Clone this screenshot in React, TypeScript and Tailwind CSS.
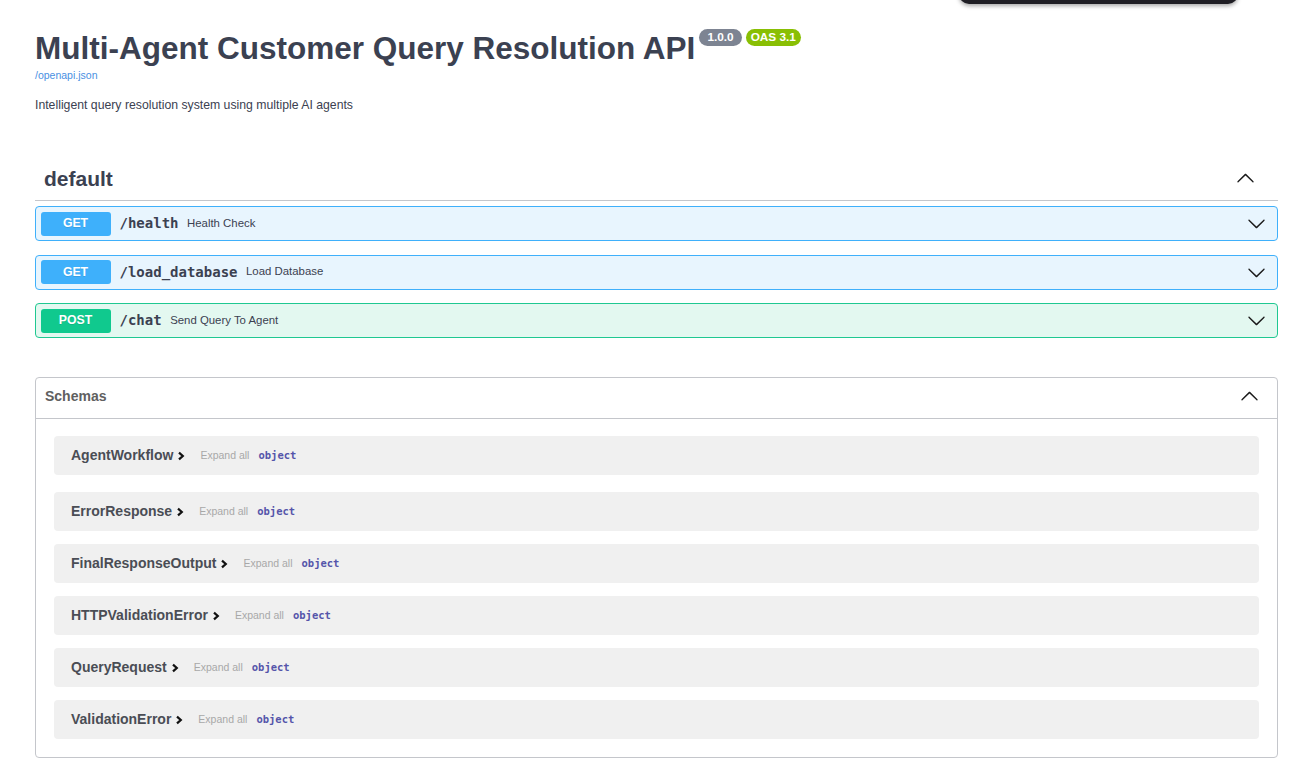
import React from "react";

const SANS = { fontFamily: '"Liberation Sans", Arial, sans-serif' };
const MONO = { fontFamily: '"DejaVu Sans Mono", "Liberation Mono", monospace' };

function Chevron({ up = false, className = "" }: { up?: boolean; className?: string }) {
  return (
    <svg
      viewBox="0 0 20 20"
      className={className}
      style={{ transform: up ? "rotate(180deg)" : undefined }}
      fill="#1b1b1b"
    >
      <path d="M17.418 6.109c.272-.268.709-.268.979 0s.271.701 0 .969l-7.908 7.83c-.27.268-.707.268-.979 0l-7.908-7.83c-.27-.268-.27-.701 0-.969.271-.268.709-.268.979 0L10 13.25l7.418-7.141z" />
    </svg>
  );
}

function RightArrow() {
  return (
    <svg viewBox="0 0 10 10" className="w-[10px] h-[10px]">
      <polyline
        points="3,1.6 6.8,5 3,8.4"
        fill="none"
        stroke="#111"
        strokeWidth="2.2"
        strokeLinecap="butt"
        strokeLinejoin="miter"
      />
    </svg>
  );
}

type Op = { method: "GET" | "POST"; path: string; summary: string };

const ops: Op[] = [
  { method: "GET", path: "/health", summary: "Health Check" },
  { method: "GET", path: "/load_database", summary: "Load Database" },
  { method: "POST", path: "/chat", summary: "Send Query To Agent" },
];

const schemas = [
  "AgentWorkflow",
  "ErrorResponse",
  "FinalResponseOutput",
  "HTTPValidationError",
  "QueryRequest",
  "ValidationError",
];

function OpRow({ op }: { op: Op }) {
  const isGet = op.method === "GET";
  return (
    <div
      className={
        "flex items-center h-[35px] rounded-[4px] border px-[4.5px] " +
        (isGet ? "border-[#3fb0fb] bg-[#e8f5fe]" : "border-[#1fc891] bg-[#e3f8f0]")
      }
    >
      <div
        className={
          "w-[70px] h-[24px] rounded-[3px] flex items-center justify-center text-white font-bold text-[12.25px] " +
          (isGet ? "bg-[#3eb0fb]" : "bg-[#10c98e]")
        }
        style={{ ...SANS, textShadow: "0 1px 0 rgba(0,0,0,.1)" }}
      >
        {op.method}
      </div>
      <span className="ml-[9px] text-[14px] font-bold text-[#3b4151]" style={MONO}>
        {op.path}
      </span>
      <span className="ml-[8.5px] text-[11.4px] text-[#3b4151]" style={SANS}>
        {op.summary}
      </span>
      <div className="flex-1" />
      <Chevron className="w-[19px] h-[19px] mr-[7px]" />
    </div>
  );
}

export default function App() {
  return (
    <div className="relative min-h-screen bg-white overflow-hidden" style={SANS}>
      <div className="absolute left-[959px] top-[-20px] w-[279px] h-[24px] rounded-[10px] bg-[#1f1e24] shadow-[0_2px_4px_rgba(0,0,0,0.35)]" />

      <div className="pl-[35px] pr-[25px] pt-[30px] pb-[14px]">
        {/* info */}
        <div className="flex items-start">
          <h2 className="text-[31.5px] leading-[36px] font-bold text-[#3b4151]">
            Multi-Agent Customer Query Resolution API
          </h2>
          <span className="ml-[4px] -mt-[1px] h-[17px] px-[8px] rounded-full bg-[#7d8492] text-white font-bold text-[11.8px] flex items-center">
            1.0.0
          </span>
          <span className="ml-[4px] -mt-[1px] h-[17px] px-[5px] rounded-full bg-[#89bf04] text-white font-bold text-[11.8px] flex items-center">
            OAS 3.1
          </span>
        </div>
        <div className="mt-[3px] text-[10.5px] leading-[12px] text-[#4990e2]">/openapi.json</div>
        <p className="mt-[16px] text-[12.25px] leading-[16px] text-[#3b4151]">
          Intelligent query resolution system using multiple AI agents
        </p>

        {/* default tag */}
        <div className="mt-[46px] h-[42px] flex items-center pl-[9px] pr-[23px] pb-[2px] border-b border-[#c4c6cb]">
          <span className="text-[21px] font-bold text-[#3b4151]">default</span>
          <div className="flex-1" />
          <Chevron up className="w-[19px] h-[19px]" />
        </div>

        <div className="mt-[5px] flex flex-col gap-[13.5px]">
          {ops.map((op) => (
            <OpRow key={op.path} op={op} />
          ))}
        </div>

        {/* schemas */}
        <div className="mt-[38.5px] border border-[#c4c6cb] rounded-[4px]">
          <div className="h-[41px] flex items-center pl-[9px] pr-[18px] pb-[2px] border-b border-[#c4c6cb]">
            <span className="text-[14px] font-bold text-[#606060]">Schemas</span>
            <div className="flex-1" />
            <Chevron up className="w-[19px] h-[19px]" />
          </div>
          <div className="pt-[17px] pb-[18px] px-[18px]">
            {schemas.map((name, i) => (
              <div
                key={name}
                className={
                  "h-[39px] rounded-[4px] bg-[#f0f0f0] flex items-center pl-[17px] " +
                  (i === 0 ? "mb-[17px]" : i === schemas.length - 1 ? "" : "mb-[13px]")
                }
              >
                <span className="text-[14px] font-bold text-[#4a4d55]">{name}</span>
                <span className="ml-[3px] mt-[1px]">
                  <RightArrow />
                </span>
                <span className="ml-[14px] mt-[2px] text-[10.5px] text-[#a8a8a8]">Expand all</span>
                <span className="ml-[9px] mt-[2px] text-[10.5px] font-bold text-[#55a]" style={MONO}>
                  object
                </span>
              </div>
            ))}
          </div>
        </div>
      </div>
    </div>
  );
}
